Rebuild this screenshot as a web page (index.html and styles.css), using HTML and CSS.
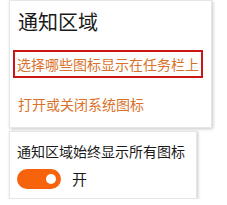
FILE: index.html
```html
<!DOCTYPE html>
<html lang="zh-CN">
<head>
<meta charset="utf-8">
<link rel="stylesheet" href="styles.css">
</head>
<body>
<div class="page">
  <section class="card card-top">
    <h1 class="title">通知区域</h1>
    <div class="highlight"><a class="link link-main">选择哪些图标显示在任务栏上</a></div>
    <a class="link link-second">打开或关闭系统图标</a>
  </section>
  <section class="card card-bottom">
    <div class="label">通知区域始终显示所有图标</div>
    <div class="toggle-row">
      <span class="toggle"><span class="knob"></span></span>
      <span class="state">开</span>
    </div>
  </section>
</div>
</body>
</html>
```
FILE: styles.css
```css
html, body {
  margin: 0;
  padding: 0;
  background: #ffffff;
}
body {
  font-family: "Noto Sans CJK SC", "Microsoft YaHei", sans-serif;
  color: #1a1a1a;
}
.page {
  padding: 0 0 0 9px;
  display: flex;
  flex-direction: column;
  gap: 3px;
}
.card {
  background: #fff;
  box-sizing: border-box;
  box-shadow: 1px 1px 3px rgba(0,0,0,0.22);
  border: 1px solid #e6e6e6;
}
.card-top {
  width: 203px;
  height: 128px;
  padding: 7px 8px 0 3px;
  display: flex;
  flex-direction: column;
}
.title {
  margin: 0 0 0 5px;
  font-size: 20px;
  font-weight: normal;
  line-height: 28px;
  color: #1a1a1a;
}
.highlight {
  margin-top: 14px;
  width: 190px;
  height: 28px;
  box-sizing: border-box;
  border: 2px solid #cc1515;
  padding-left: 2px;
  display: flex;
  align-items: center;
}
.link {
  color: #d9722c;
  text-decoration: none;
  white-space: nowrap;
}
.link-main {
  font-size: 14px;
  line-height: 24px;
}
.link-second {
  margin: 14px 0 0 5px;
  font-size: 14px;
  line-height: 24px;
}
.card-bottom {
  width: 188px;
  height: 68px;
  padding: 9px 8px 0 7px;
}
.label {
  font-size: 14px;
  line-height: 20px;
  color: #1a1a1a;
}
.toggle-row {
  margin-top: 8px;
  display: flex;
  align-items: center;
  gap: 11px;
}
.toggle {
  width: 44px;
  height: 20px;
  border-radius: 10px;
  background: #f7630c;
  position: relative;
  flex: none;
}
.knob {
  position: absolute;
  right: 5px;
  top: 5px;
  width: 10px;
  height: 10px;
  border-radius: 50%;
  background: #fff;
}
.state {
  font-size: 15px;
  line-height: 20px;
  color: #1a1a1a;
}
```
